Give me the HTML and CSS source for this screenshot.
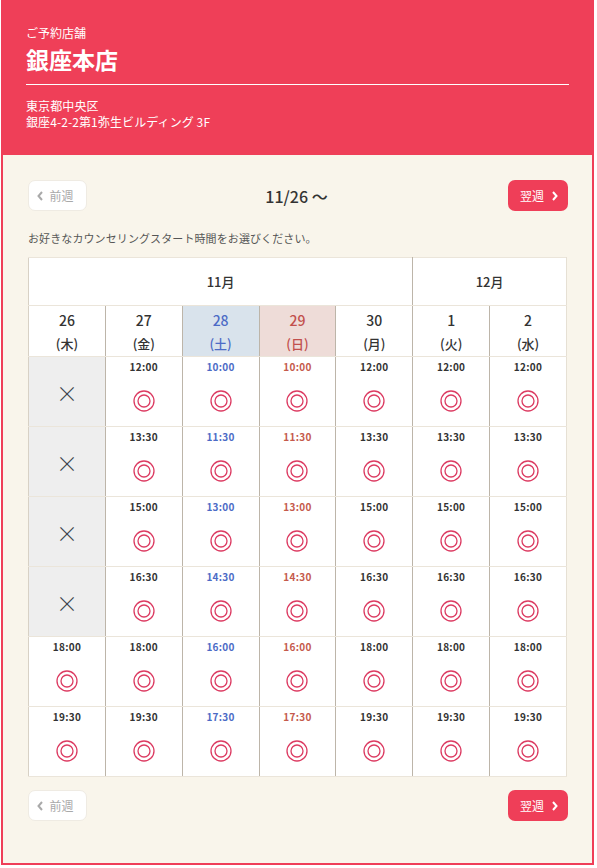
FILE: index.html
```html
<!DOCTYPE html>
<html lang="ja">
<head>
    <meta charset="utf-8">
    <link rel="stylesheet" href="styles.css">
</head>
<body>
    <div class="reserve">
        <header class="shop-header">
            <p class="shop-label">ご予約店舗</p>
            <h1 class="shop-name">銀座本店</h1>
            <p class="shop-address">東京都中央区<br>銀座4-2-2第1弥生ビルディング 3F</p>
        </header>

        <main class="calendar-area">
            <div class="week-nav">
                <button class="nav-btn nav-prev">
                    <svg class="chev" width="6" height="10" viewBox="0 0 6 10"><polyline points="5,1 1.5,5 5,9" fill="none" stroke="currentColor" stroke-width="2"/></svg>
                    前週
                </button>
                <div class="week-title">11/26 〜</div>
                <button class="nav-btn nav-next">
                    翌週
                    <svg class="chev" width="6" height="10" viewBox="0 0 6 10"><polyline points="1,1 4.5,5 1,9" fill="none" stroke="currentColor" stroke-width="2"/></svg>
                </button>
            </div>

            <p class="guide">お好きなカウンセリングスタート時間をお選びください。</p>

            <table class="slots">
                <thead>
                    <tr class="month-row">
                        <th colspan="5">11月</th>
                        <th colspan="2">12月</th>
                    </tr>
                    <tr class="day-row" id="dayRow"></tr>
                </thead>
                <tbody id="slotBody"></tbody>
            </table>

            <div class="week-nav week-nav-bottom">
                <button class="nav-btn nav-prev">
                    <svg class="chev" width="6" height="10" viewBox="0 0 6 10"><polyline points="5,1 1.5,5 5,9" fill="none" stroke="currentColor" stroke-width="2"/></svg>
                    前週
                </button>
                <button class="nav-btn nav-next">
                    翌週
                    <svg class="chev" width="6" height="10" viewBox="0 0 6 10"><polyline points="1,1 4.5,5 1,9" fill="none" stroke="currentColor" stroke-width="2"/></svg>
                </button>
            </div>
        </main>
    </div>

    <script>
        const weekday = ['12:00', '13:30', '15:00', '16:30', '18:00', '19:30'];
        const weekend = ['10:00', '11:30', '13:00', '14:30', '16:00', '17:30'];

        const days = [
            { d: 26, w: '木', times: [null, null, null, null, '18:00', '19:30'] },
            { d: 27, w: '金', times: weekday },
            { d: 28, w: '土', times: weekend, cls: 'sat' },
            { d: 29, w: '日', times: weekend, cls: 'sun' },
            { d: 30, w: '月', times: weekday },
            { d: 1, w: '火', times: weekday },
            { d: 2, w: '水', times: weekday }
        ];

        const mark = `<svg class="mark" width="22" height="22" viewBox="0 0 22 22">
            <circle cx="11" cy="11" r="10" fill="none" stroke="#dc3b62" stroke-width="1.3"/>
            <circle cx="11" cy="11" r="6" fill="none" stroke="#dc3b62" stroke-width="1.3"/>
        </svg>`;

        document.getElementById('dayRow').innerHTML = days.map(day => `
            <th class="${day.cls || ''}">
                <span class="day-num">${day.d}</span>
                <span class="day-week">(${day.w})</span>
            </th>
        `).join('');

        let rows = '';
        for (let i = 0; i < 6; i++) {
            rows += '<tr>' + days.map(day => {
                const t = day.times[i];
                if (!t) return '<td class="closed">×</td>';
                return `<td class="${day.cls || ''}"><span class="time">${t}</span>${mark}</td>`;
            }).join('') + '</tr>';
        }
        document.getElementById('slotBody').innerHTML = rows;
    </script>
</body>
</html>
```

FILE: styles.css
```css
* {
    box-sizing: border-box;
}

body {
    margin: 0;
    font-family: "Noto Sans CJK JP", "Noto Sans", sans-serif;
    color: #333;
    background: #fff;
}

.reserve {
    margin-left: 1px;
    width: 593px;
    border: 2px solid #ef3e58;
    border-top: none;
    background: #f9f5eb;
}

/* header */
.shop-header {
    background: #ef3f58;
    color: #fff;
    padding: 25px 23px 25px;
}

.shop-label {
    margin: 0;
    font-size: 12px;
    line-height: 16px;
}

.shop-name {
    margin: 3px 0 0;
    font-size: 23px;
    line-height: 30px;
    font-weight: bold;
    padding-bottom: 10px;
    border-bottom: 1px solid #fff;
}

.shop-address {
    margin: 13px 0 0;
    font-size: 12px;
    line-height: 16px;
    letter-spacing: 0.1px;
}

/* calendar */
.calendar-area {
    padding: 25px 24px 42px 25px;
}

.week-nav {
    display: flex;
    align-items: center;
    justify-content: space-between;
    height: 31px;
}

.week-title {
    font-size: 16px;
    font-weight: 500;
    color: #333;
    padding-right: 2px;
}

.nav-btn {
    font-family: inherit;
    font-size: 12px;
    height: 31px;
    border-radius: 7px;
    cursor: pointer;
    display: flex;
    align-items: center;
    justify-content: center;
    gap: 6px;
}

.nav-prev {
    background: #fff;
    color: #a9a9a9;
    border: 1px solid #efebe3;
    width: 59px;
    padding: 0 4px 0 0;
}

.nav-next {
    background: #ef3e58;
    color: #fff;
    border: none;
    width: 60px;
    padding: 0 0 0 2px;
    gap: 8px;
}

.chev {
    display: block;
}

.guide {
    margin: 19px 0 11px;
    font-size: 11px;
    line-height: 16px;
    color: #555;
    letter-spacing: 0.1px;
}

.slots {
    width: 539px;
    border-collapse: collapse;
    table-layout: fixed;
    background: #fff;
    border: 1px solid #e6e0d4;
}

.slots th,
.slots td {
    border-top: 1px solid #ebe5da;
    border-bottom: 1px solid #ebe5da;
    border-left: 1px solid #bdb5a9;
    border-right: 1px solid #bdb5a9;
    text-align: center;
    padding: 0;
}

.slots th:first-child,
.slots td:first-child {
    border-left-color: #d8d1c5;
}

.slots th:last-child,
.slots td:last-child {
    border-right-color: #e6e0d4;
}

.month-row th {
    height: 48px;
    font-size: 13px;
    font-weight: 500;
}

.day-row th {
    height: 51px;
    font-weight: 500;
    vertical-align: top;
    padding-top: 4px;
}

.day-num {
    display: block;
    font-size: 14px;
    line-height: 20px;
}

.day-week {
    display: block;
    font-size: 13px;
    line-height: 20px;
    margin-top: 4px;
}

.day-row th.sat {
    background: #d9e3ec;
    color: #4c6bc6;
}

.day-row th.sun {
    background: #eedcd8;
    color: #c24f4c;
}

.slots td {
    height: 70px;
    vertical-align: top;
    padding-top: 3px;
}

.time {
    display: block;
    font-size: 10px;
    font-weight: bold;
    line-height: 14px;
    letter-spacing: 0.3px;
}

td.sat .time {
    color: #4c6bc6;
}

td.sun .time {
    color: #c55a4c;
}

.mark {
    display: block;
    margin: 16px auto 0;
}

td.closed {
    background: #eeeeee;
    vertical-align: middle;
    padding: 0;
    font-size: 22px;
    font-weight: 300;
    color: #3a3f4a;
}

.week-nav-bottom {
    margin-top: 13px;
}
```
